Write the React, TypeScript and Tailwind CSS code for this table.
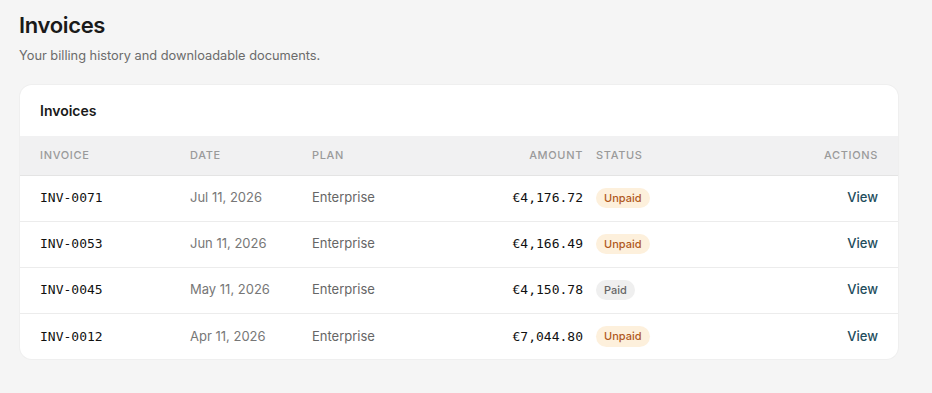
import { Fragment } from "react";

interface Invoice {
  id: string;
  date: string;
  plan: string;
  amount: string;
  status: "Paid" | "Unpaid";
}

const invoices: Invoice[] = [
  { id: "INV-0071", date: "Jul 11, 2026", plan: "Enterprise", amount: "€4,176.72", status: "Unpaid" },
  { id: "INV-0053", date: "Jun 11, 2026", plan: "Enterprise", amount: "€4,166.49", status: "Unpaid" },
  { id: "INV-0045", date: "May 11, 2026", plan: "Enterprise", amount: "€4,150.78", status: "Paid" },
  { id: "INV-0012", date: "Apr 11, 2026", plan: "Enterprise", amount: "€7,044.80", status: "Unpaid" },
];

const mono = "font-['DejaVu_Sans_Mono',monospace]";

function StatusBadge({ status }: { status: Invoice["status"] }) {
  if (status === "Paid") {
    return <span className="inline-flex items-center rounded-full bg-[#efefef] px-2 py-[2px] text-[11px] font-medium text-[#666]">Paid</span>;
  }
  return <span className="inline-flex items-center rounded-full bg-[#fdf0dc] px-2 py-[2px] text-[11px] font-medium text-[#b0581c]">Unpaid</span>;
}

export default function App() {
  return (
    <div className="min-h-screen bg-[#f5f5f5] px-5 pt-[10px] pb-8 font-['Inter',sans-serif] text-[#1a1a1a]">
      {/* Header */}
      <h1 className="ml-[-1px] text-[22px] font-semibold leading-[30px] tracking-[-0.015em]">Invoices</h1>
      <p className="ml-[-1px] mt-[7px] text-[12.8px] leading-[18px] text-[#6b6b6b]">Your billing history and downloadable documents.</p>

      {/* Card */}
      <div className="mt-[20px] w-[878px] overflow-hidden rounded-xl bg-white shadow-[0_0_0_1px_#efefef]">
        <div className="flex h-[51px] items-center px-5">
          <h2 className="text-[14px] font-semibold">Invoices</h2>
        </div>
        <table className="w-full table-fixed border-collapse text-[13px]">
          <colgroup>
            <col className="w-[164px]" />
            <col className="w-[122px]" />
            <col className="w-[164px]" />
            <col className="w-[119px]" />
            <col className="w-[111px]" />
            <col />
          </colgroup>
          <thead>
            <tr className="h-[39px] border-b border-[#e4e4e4] bg-[#f1f1f2] text-[11px] font-medium uppercase tracking-[0.06em] text-[#9a9a9a]">
              <th className="pl-5 text-left font-medium">Invoice</th>
              <th className="pl-[6px] text-left font-medium">Date</th>
              <th className="pl-[6px] text-left font-medium">Plan</th>
              <th className="pr-[6px] text-right font-medium">Amount</th>
              <th className="pl-[7px] text-left font-medium">Status</th>
              <th className="pr-5 text-right font-medium">Actions</th>
            </tr>
          </thead>
          <tbody>
            {invoices.map((inv, i) => (
              <Fragment key={inv.id}>
                <tr className={`h-[46px] ${i < invoices.length - 1 ? "border-b border-[#ececec]" : ""}`}>
                  <td className={`pl-5 text-[13px] text-[#111] ${mono}`}>{inv.id}</td>
                  <td className="pl-[6px] text-[#777]">{inv.date}</td>
                  <td className="pl-[6px] text-[#666]">{inv.plan}</td>
                  <td className={`pr-[6px] text-right text-[13px] text-[#111] ${mono}`}>{inv.amount}</td>
                  <td className="pl-[7px]"><StatusBadge status={inv.status} /></td>
                  <td className="pr-5 text-right">
                    <a className="cursor-pointer font-medium text-[#1e4d5c]">View</a>
                  </td>
                </tr>
              </Fragment>
            ))}
          </tbody>
        </table>
      </div>
    </div>
  );
}
